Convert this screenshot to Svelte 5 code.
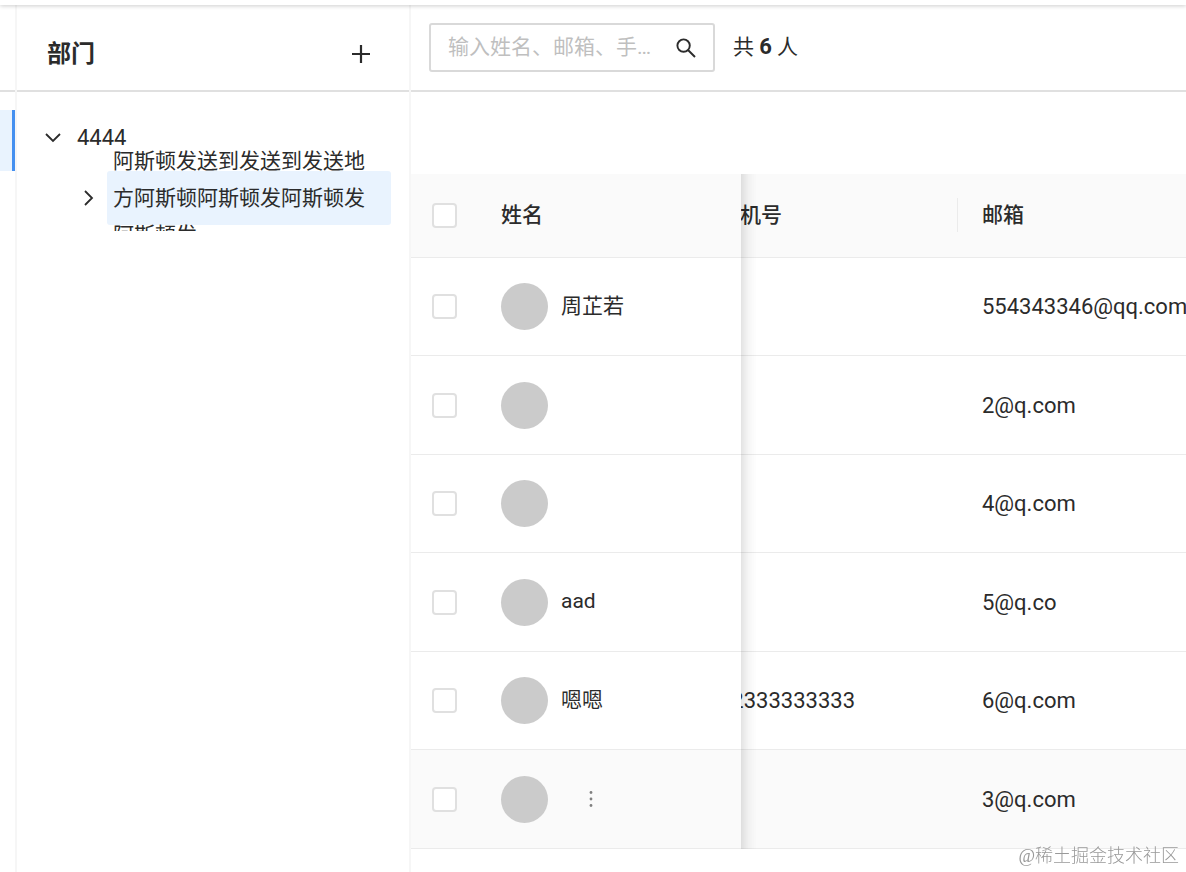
<script lang="ts">
  import { onMount } from 'svelte';

  interface Member {
    id: number;
    name: string;
    phone: string;
    email: string;
    active?: boolean;
  }

  const members: Member[] = [
    { id: 1, name: '周芷若', phone: '', email: '554343346@qq.com' },
    { id: 2, name: '', phone: '', email: '2@q.com' },
    { id: 3, name: '', phone: '', email: '4@q.com' },
    { id: 4, name: 'aad', phone: '', email: '5@q.co' },
    { id: 5, name: '嗯嗯', phone: '12333333333', email: '6@q.com' },
    { id: 6, name: '', phone: '', email: '3@q.com', active: true }
  ];

  let keyword = $state('');
  let selected: number[] = $state([]);
  let scroller: HTMLDivElement;

  const allSelected = $derived(selected.length === members.length);

  function toggleAll() {
    selected = allSelected ? [] : members.map((m) => m.id);
  }

  onMount(() => {
    scroller.scrollLeft = 46;
  });
</script>

<div class="page">
  <nav class="rail" aria-label="主菜单">
    <div class="rail-head"></div>
    <a class="rail-item" href="#members" aria-label="成员"></a>
  </nav>

  <aside class="sidebar">
    <header class="sidebar-head">
      <h2>部门</h2>
      <button class="icon-btn" aria-label="添加部门">
        <svg width="20" height="20" viewBox="0 0 20 20" fill="none" stroke="currentColor" stroke-width="2.2">
          <path d="M10 1v18M1 10h18" />
        </svg>
      </button>
    </header>

    <ul class="tree">
      <li class="node">
        <button class="icon-btn switcher" aria-label="收起">
          <svg width="18" height="18" viewBox="0 0 18 18" fill="none" stroke="currentColor" stroke-width="1.8">
            <path d="M2 6l7 7 7-7" />
          </svg>
        </button>
        <a class="node-title latin" href="#root">4444</a>
      </li>
      <li class="node child">
        <button class="icon-btn switcher" aria-label="展开">
          <svg width="18" height="18" viewBox="0 0 18 18" fill="none" stroke="currentColor" stroke-width="1.8">
            <path d="M5 2l7 7-7 7" />
          </svg>
        </button>
        <a class="node-title current" href="#child">
          <span>阿斯顿发送到发送到发送地方阿斯顿阿斯顿发阿斯顿发阿斯顿发</span>
        </a>
      </li>
    </ul>
  </aside>

  <main class="main">
    <header class="toolbar">
      <div class="search">
        <input type="text" bind:value={keyword} placeholder="输入姓名、邮箱、手机号" aria-label="搜索成员" />
        <button class="icon-btn" aria-label="搜索">
          <svg width="20" height="20" viewBox="0 0 20 20" fill="none" stroke="currentColor" stroke-width="1.9">
            <circle cx="7.6" cy="7.6" r="6.2" />
            <path d="M12 12l7 7" />
          </svg>
        </button>
      </div>
      <p class="total">共 <b class="latin">6</b> 人</p>
    </header>

    <div class="table-scroll" bind:this={scroller}>
      <table>
        <colgroup>
          <col class="col-check" />
          <col class="col-name" />
          <col class="col-phone" />
          <col class="col-email" />
        </colgroup>
        <thead>
          <tr>
            <th class="check"><input type="checkbox" checked={allSelected} onchange={toggleAll} aria-label="全选" /></th>
            <th class="name">姓名</th>
            <th class="phone">手机号</th>
            <th>邮箱</th>
          </tr>
        </thead>
        <tbody>
          {#each members as member (member.id)}
            <tr class:active={member.active}>
              <td class="check">
                <input type="checkbox" value={member.id} bind:group={selected} aria-label="选择成员" />
              </td>
              <td class="name">
                <div class="person">
                  <span class="avatar"></span>
                  <span>{member.name}</span>
                  {#if member.active}
                    <button class="icon-btn more" aria-label="更多">
                      <svg width="6" height="18" viewBox="0 0 6 18" fill="currentColor">
                        <circle cx="3" cy="2.5" r="1.4" />
                        <circle cx="3" cy="9" r="1.4" />
                        <circle cx="3" cy="15.5" r="1.4" />
                      </svg>
                    </button>
                  {/if}
                </div>
              </td>
              <td class="latin">{member.phone}</td>
              <td class="latin">{member.email}</td>
            </tr>
          {/each}
        </tbody>
      </table>
    </div>
  </main>

  <span class="watermark">@稀土掘金技术社区</span>
</div>

<style>
  :global(body) {
    background: #fff;
  }

  .page {
    --ink: #2b2b2b;
    --line: #e0e0e0;
    --soft: #ebebeb;
    --tint: #e9f3fe;
    position: relative;
    display: grid;
    grid-template-columns: 17px 394px minmax(0, 1fr);
    box-sizing: border-box;
    min-height: 100vh;
    padding-top: 5px;
    overflow: hidden;
    color: var(--ink);
    font: 400 21px/1.5 Roboto, 'Noto Sans CJK SC', sans-serif;
  }

  /* bottom edge of the bar above the page */
  .page::before {
    content: '';
    position: absolute;
    inset: 0 0 auto;
    height: 5px;
    box-shadow: 0 1px 4px rgba(0, 0, 0, 0.2);
    background: #fff;
  }

  .latin {
    font-size: 22px;
  }

  .icon-btn {
    display: inline-flex;
    align-items: center;
    justify-content: center;
    padding: 0;
    border: 0;
    background: none;
    color: inherit;
    cursor: pointer;
  }

  .rail,
  .sidebar {
    border-right: 2px solid #f6f6f6;
  }

  .rail-head,
  .sidebar-head,
  .toolbar {
    box-sizing: border-box;
    height: 87px;
    border-bottom: 2px solid var(--line);
  }

  .rail-item {
    display: block;
    height: 61px;
    margin-top: 18px;
    border-right: 3px solid #4590f0;
    background: var(--tint);
  }

  .sidebar-head {
    display: flex;
    align-items: center;
    justify-content: space-between;
    padding: 12px 38px 0 30px;
  }

  h2 {
    margin: 0;
    font-size: 24px;
    font-weight: 700;
  }

  .tree {
    margin: 18px 0 0;
    padding: 0 18px 6px 26px;
    overflow: hidden;
    list-style: none;
  }

  .node {
    display: flex;
    align-items: center;
    gap: 8px;
    height: 54px;
  }

  .child {
    margin-top: 7px;
    padding-left: 36px;
  }

  .switcher {
    flex: none;
    width: 20px;
    height: 54px;
  }

  .node-title {
    display: flex;
    flex: 1;
    align-items: center;
    box-sizing: border-box;
    height: 54px;
    padding: 0 12px 0 6px;
    border-radius: 3px;
    color: inherit;
    line-height: 37px;
    text-decoration: none;
  }

  .node-title.current {
    background: var(--tint);
  }

  .toolbar {
    display: flex;
    align-items: flex-start;
    gap: 18px;
    padding: 18px 18px 0;
  }

  .search {
    display: flex;
    align-items: center;
    box-sizing: border-box;
    width: 286px;
    height: 49px;
    padding: 0 17px;
    border: 2px solid #d9d9d9;
    border-radius: 3px;
  }

  .search input {
    flex: 1;
    min-width: 0;
    margin-right: 20px;
    padding: 0;
    border: 0;
    outline: 0;
    background: none;
    color: inherit;
    font: inherit;
    text-overflow: ellipsis;
  }

  .search input::placeholder {
    color: #bfbfbf;
    opacity: 1;
  }

  .total {
    margin: 0;
    line-height: 48px;
  }

  .table-scroll {
    margin-top: 82px;
    overflow-x: auto;
    scrollbar-width: none;
  }

  table {
    width: 100%;
    min-width: 893px;
    border-spacing: 0;
    table-layout: fixed;
  }

  .col-check {
    width: 66px;
  }

  .col-name {
    width: 264px;
  }

  .col-phone {
    width: 263px;
  }

  th,
  td {
    box-sizing: border-box;
    height: 99px;
    padding: 0 24px;
    border-bottom: 1px solid var(--soft);
    background: #fff;
    text-align: left;
    white-space: nowrap;
  }

  th {
    height: 84px;
    background: #fafafa;
    font-weight: 500;
  }

  tr:nth-child(odd) td {
    height: 98px;
  }

  .active td {
    background: #fafafa;
  }

  th.phone {
    position: relative;
  }

  th.phone::after {
    content: '';
    position: absolute;
    top: 24px;
    right: 0;
    width: 1px;
    height: 34px;
    background: var(--soft);
  }

  .check,
  .name {
    position: sticky;
    z-index: 1;
  }

  .check {
    left: 0;
    padding: 0 21px;
  }

  .name {
    left: 66px;
  }

  .name::after {
    content: '';
    position: absolute;
    top: 0;
    bottom: -1px;
    left: 100%;
    width: 16px;
    background: linear-gradient(90deg, rgba(0, 0, 0, 0.11), rgba(0, 0, 0, 0.03) 50%, transparent);
    pointer-events: none;
  }

  input[type='checkbox'] {
    appearance: none;
    display: block;
    box-sizing: border-box;
    width: 25px;
    height: 25px;
    margin: 0;
    border: 2px solid #e0e0e0;
    border-radius: 4px;
    background: #fff;
  }

  input[type='checkbox']:checked {
    border-color: #4590f0;
    background: #4590f0;
  }

  .person {
    display: flex;
    align-items: center;
    gap: 13px;
  }

  .avatar {
    width: 47px;
    height: 47px;
    border-radius: 50%;
    background: #cbcbcb;
  }

  .more {
    width: 34px;
    height: 34px;
    color: #808080;
  }

  .watermark {
    position: absolute;
    right: 7px;
    bottom: 3px;
    z-index: 2;
    color: #999;
    font: 300 18px/26px 'Liberation Serif', 'Noto Sans CJK SC', serif;
  }
</style>
